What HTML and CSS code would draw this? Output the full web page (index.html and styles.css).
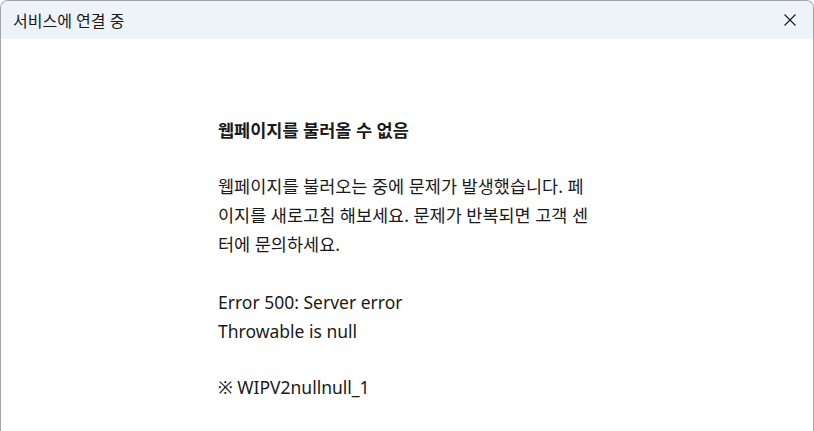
FILE: index.html
```html
<!DOCTYPE html>
<html lang="ko">
<head>
    <meta charset="UTF-8">
    <meta name="viewport" content="width=device-width, initial-scale=1.0">
    <title>서비스에 연결 중</title>
    <link rel="stylesheet" href="styles.css">
</head>
<body>
    <div class="window">
        <div class="titlebar">
            <span class="title">서비스에 연결 중</span>
            <button class="close" aria-label="닫기">
                <svg width="12" height="12" viewBox="0 0 12 12">
                    <path d="M0.5 0.5 L11.5 11.5 M11.5 0.5 L0.5 11.5" stroke="#1a1a1a" stroke-width="1.1" fill="none"/>
                </svg>
            </button>
        </div>

        <div class="content">
            <div class="message">
                <h1>웹페이지를 불러올 수 없음</h1>
                <p>웹페이지를 불러오는 중에 문제가 발생했습니다. 페이지를 새로고침 해보세요. 문제가 반복되면 고객 센터에 문의하세요.</p>
                <p class="error">Error 500: Server error<br>Throwable is null</p>
                <p>※ WIPV2nullnull_1</p>
            </div>
        </div>
    </div>
</body>
</html>
```

FILE: styles.css
```css
* {
    margin: 0;
    padding: 0;
    box-sizing: border-box;
}
html, body {
    height: 100%;
    background: #ffffff;
}
body {
    font-family: "Noto Sans", "Noto Sans CJK KR", sans-serif;
    color: #1a1a1a;
}
.window {
    display: flex;
    flex-direction: column;
    height: 100%;
    border: 1px solid #a3a3a3;
    border-bottom: none;
    border-radius: 8px 8px 0 0;
    overflow: hidden;
}
.titlebar {
    display: flex;
    justify-content: space-between;
    align-items: center;
    height: 39px;
    padding: 0 11px 0 12px;
    background-color: #eef2f9;
}
.title {
    font-size: 16px;
    color: #1a1a1a;
}
.close {
    display: flex;
    align-items: center;
    justify-content: center;
    width: 24px;
    height: 24px;
    border: none;
    background: none;
    cursor: pointer;
}
.content {
    flex: 1;
    padding-top: 77px;
}
.message {
    width: 378px;
    margin: 0 auto;
    font-size: 17.5px;
    line-height: 29px;
}
.message h1 {
    font-size: 17.5px;
    font-weight: bold;
    line-height: 29px;
    margin-bottom: 27px;
}
.message p {
    margin-bottom: 29px;
}
.message .error {
    margin-bottom: 27px;
}
```
